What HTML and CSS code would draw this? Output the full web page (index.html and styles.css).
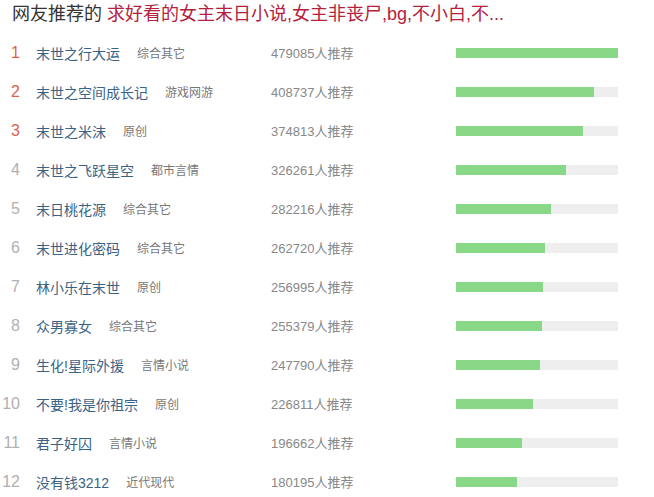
FILE: index.html
```html
<!DOCTYPE html>
<html lang="zh-CN">
<head>
<meta charset="utf-8">
<title>网友推荐</title>
<link rel="stylesheet" href="styles.css">
</head>
<body>
<div class="box">
  <h2 class="head"><span class="lead">网友推荐的</span> <span class="q">求好看的女主末日小说,女主非丧尸,bg,不小白,不...</span></h2>
  <ol class="list">
    <li class="row"><span class="rank top">1</span><span class="name"><a class="title">末世之行大运</a><span class="cat">综合其它</span></span><span class="count">479085人推荐</span><span class="bar"><span class="fill" style="width:162px"></span></span></li>
    <li class="row"><span class="rank top">2</span><span class="name"><a class="title">末世之空间成长记</a><span class="cat">游戏网游</span></span><span class="count">408737人推荐</span><span class="bar"><span class="fill" style="width:138px"></span></span></li>
    <li class="row"><span class="rank top">3</span><span class="name"><a class="title">末世之米沫</a><span class="cat">原创</span></span><span class="count">374813人推荐</span><span class="bar"><span class="fill" style="width:127px"></span></span></li>
    <li class="row"><span class="rank">4</span><span class="name"><a class="title">末世之飞跃星空</a><span class="cat">都市言情</span></span><span class="count">326261人推荐</span><span class="bar"><span class="fill" style="width:110px"></span></span></li>
    <li class="row"><span class="rank">5</span><span class="name"><a class="title">末日桃花源</a><span class="cat">综合其它</span></span><span class="count">282216人推荐</span><span class="bar"><span class="fill" style="width:95px"></span></span></li>
    <li class="row"><span class="rank">6</span><span class="name"><a class="title">末世进化密码</a><span class="cat">综合其它</span></span><span class="count">262720人推荐</span><span class="bar"><span class="fill" style="width:89px"></span></span></li>
    <li class="row"><span class="rank">7</span><span class="name"><a class="title">林小乐在末世</a><span class="cat">原创</span></span><span class="count">256995人推荐</span><span class="bar"><span class="fill" style="width:87px"></span></span></li>
    <li class="row"><span class="rank">8</span><span class="name"><a class="title">众男寡女</a><span class="cat">综合其它</span></span><span class="count">255379人推荐</span><span class="bar"><span class="fill" style="width:86px"></span></span></li>
    <li class="row"><span class="rank">9</span><span class="name"><a class="title">生化!星际外援</a><span class="cat">言情小说</span></span><span class="count">247790人推荐</span><span class="bar"><span class="fill" style="width:84px"></span></span></li>
    <li class="row"><span class="rank">10</span><span class="name"><a class="title">不要!我是你祖宗</a><span class="cat">原创</span></span><span class="count">226811人推荐</span><span class="bar"><span class="fill" style="width:77px"></span></span></li>
    <li class="row"><span class="rank">11</span><span class="name"><a class="title">君子好囚</a><span class="cat">言情小说</span></span><span class="count">196662人推荐</span><span class="bar"><span class="fill" style="width:66px"></span></span></li>
    <li class="row"><span class="rank">12</span><span class="name"><a class="title">没有钱3212</a><span class="cat">近代现代</span></span><span class="count">180195人推荐</span><span class="bar"><span class="fill" style="width:61px"></span></span></li>
  </ol>
</div>
</body>
</html>
```
FILE: styles.css
```css
html, body {
  margin: 0;
  padding: 0;
  background: #fff;
}
body {
  font-family: "Liberation Sans", "Noto Sans CJK SC", Arial, sans-serif;
}
.box {
  width: 654px;
}
.head {
  margin: 0;
  padding-left: 12px;
  height: 28px;
  line-height: 28px;
  font-size: 18px;
  font-weight: normal;
  white-space: nowrap;
}
.lead { color: #333; }
.q { color: #b5213d; }
.list {
  list-style: none;
  margin: 0;
  padding: 5px 0 0 0;
}
.row {
  display: grid;
  grid-template-columns: 20px 251px 185px 162px;
  align-items: center;
  height: 39px;
}
.rank {
  font-size: 16px;
  color: #b0b0b0;
  text-align: right;
}
.rank.top { color: #d9624f; }
.name {
  padding-left: 16px;
  display: flex;
  align-items: center;
  white-space: nowrap;
}
.title {
  font-size: 14px;
  color: #3a6285;
  text-decoration: none;
}
.cat {
  margin-left: 17px;
  font-size: 12px;
  color: #777;
}
.count {
  font-size: 13px;
  color: #888;
}
.bar {
  display: block;
  height: 10px;
  background: #eee;
}
.fill {
  display: block;
  height: 10px;
  background: #88d888;
}
```
